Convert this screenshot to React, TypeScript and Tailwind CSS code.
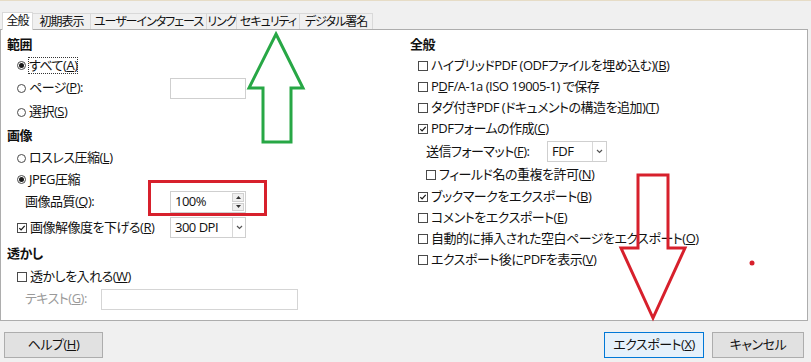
import React from 'react';

function Box({ checked = false }: { checked?: boolean }) {
  return (
    <span className="inline-flex w-[10px] h-[10px] border border-[#4a4a4a] bg-white items-center justify-center mr-[3px] shrink-0">
      {checked && (
        <svg width="8" height="8" viewBox="0 0 8 8">
          <path d="M1.3 4.1 L3.1 5.9 L6.7 1.9" stroke="#1a1a1a" strokeWidth="1.3" fill="none" />
        </svg>
      )}
    </span>
  );
}

function Radio({ on = false }: { on?: boolean }) {
  return (
    <span className="inline-flex w-[9px] h-[9px] rounded-full border border-[#4a4a4a] bg-white items-center justify-center mr-[3px] shrink-0">
      {on && <span className="w-[5px] h-[5px] rounded-full bg-[#1a1a1a]" />}
    </span>
  );
}

function Chevron() {
  return (
    <svg width="7" height="5" viewBox="0 0 7 5">
      <path d="M1 1 L3.5 3.5 L6 1" stroke="#555" strokeWidth="1.2" fill="none" />
    </svg>
  );
}

export default function App() {
  const tabs = [
    { label: '全般', w: 'w-[31px]', active: true },
    { label: '初期表示', w: 'w-[58px]' },
    { label: 'ユーザーインタフェース', w: 'w-[116px]' },
    { label: 'リンク', w: 'w-[30px]' },
    { label: 'セキュリティ', w: 'w-[63px]' },
    { label: 'デジタル署名', w: 'w-[73px]' },
  ];

  return (
    <div className="relative w-[811px] h-[362px] overflow-hidden bg-[#f0f0f0] text-[13px] tracking-[-0.5px] text-[#111] [font-family:'Open_Sans','Noto_Sans_CJK_JP',sans-serif] [font-feature-settings:'palt']">
      <div className="h-[1px] bg-[#e6dcc6]" />

      {/* Tabs */}
      <div className="h-[28px] flex items-end pl-[2px] relative z-10">
        {tabs.map((t) =>
          t.active ? (
            <div key={t.label} className={`${t.w} h-[18px] -mb-[1px] bg-white border border-[#d9d9d9] border-b-0 flex items-center justify-center text-[12px] tracking-[-1px] leading-none whitespace-nowrap pb-[1px]`}>
              {t.label}
            </div>
          ) : (
            <div key={t.label} className={`${t.w} h-[16px] bg-[#f0f0f0] border border-[#d9d9d9] border-b-0 border-l-0 flex items-center justify-center text-[12px] tracking-[-1px] leading-none whitespace-nowrap`}>
              {t.label}
            </div>
          )
        )}
      </div>

      {/* Panel */}
      <div className="w-[808px] h-[292px] bg-white border border-[#adadad] flex pt-[5px]">
        {/* Left column */}
        <div className="w-[409px] pl-[6px] flex flex-col">
          <div className="h-[20px] flex items-center font-bold">範囲</div>
          <div className="h-[21px] flex items-center pl-[10px]">
            <Radio on />
            <span className="outline outline-1 outline-dotted outline-[#333] leading-[15px]">すべて(<u>A</u>)</span>
          </div>
          <div className="h-[24px] flex items-center pl-[10px]">
            <div className="w-[153px] flex items-center">
              <Radio />
              ページ(<u>P</u>):
            </div>
            <div className="w-[76px] h-[21px] border border-[#cfcfcf] bg-white" />
          </div>
          <div className="h-[24px] flex items-center pl-[10px]">
            <Radio />
            選択(<u>S</u>)
          </div>
          <div className="h-[23px] flex items-center font-bold">画像</div>
          <div className="h-[22px] flex items-center pl-[10px]">
            <Radio />
            ロスレス圧縮(<u>L</u>)
          </div>
          <div className="h-[21px] flex items-center pl-[10px]">
            <Radio on />
            <u>J</u>PEG圧縮
          </div>
          <div className="h-[24px] flex items-center pl-[18px]">
            <div className="w-[145px]">
              画像品質(<u>Q</u>):
            </div>
            <div className="w-[76px] h-[22px] border border-[#cfcfcf] bg-white flex items-center">
              <span className="flex-1 pl-[4px]">100%</span>
              <div className="w-[12px] h-[18px] mr-[1px] flex flex-col gap-[1px]">
                <div className="flex-1 border border-[#d0d0d0] bg-[#f0f0f0] flex items-center justify-center">
                  <svg width="5" height="3" viewBox="0 0 5 3"><path d="M0 3 L2.5 0 L5 3 Z" fill="#333" /></svg>
                </div>
                <div className="flex-1 border border-[#d0d0d0] bg-[#f0f0f0] flex items-center justify-center">
                  <svg width="5" height="3" viewBox="0 0 5 3"><path d="M0 0 L2.5 3 L5 0 Z" fill="#333" /></svg>
                </div>
              </div>
            </div>
          </div>
          <div className="h-[27px] flex items-center pl-[10px]">
            <div className="w-[153px] flex items-center">
              <Box checked />
              画像解像度を下げる(<u>R</u>)
            </div>
            <div className="w-[76px] h-[21px] border border-[#cfcfcf] bg-white flex items-center">
              <span className="flex-1 pl-[4px]">300 DPI</span>
              <div className="w-[13px] h-[19px] border-l border-[#d8d8d8] flex items-center justify-center">
                <Chevron />
              </div>
            </div>
          </div>
          <div className="h-[25px] flex items-center font-bold">透かし</div>
          <div className="h-[22px] flex items-center pl-[10px]">
            <Box />
            透かしを入れる(<u>W</u>)
          </div>
          <div className="h-[22px] flex items-center pl-[18px]">
            <div className="w-[76px] text-[#9a9a9a]">
              テキスト(<u>G</u>):
            </div>
            <div className="w-[197px] h-[21px] border border-[#d5d5d5] bg-white" />
          </div>
        </div>

        {/* Right column */}
        <div className="flex-1 flex flex-col">
          <div className="h-[20px] flex items-center font-bold">全般</div>
          <div className="h-[21px] flex items-center pl-[8px]">
            <Box />
            ハイブリッドPDF (ODFファイルを埋め込む)(<u>B</u>)
          </div>
          <div className="h-[21px] flex items-center pl-[8px]">
            <Box />
            P<u>D</u>F/A-1a (ISO 19005-1) で保存
          </div>
          <div className="h-[21px] flex items-center pl-[8px]">
            <Box />
            タグ付きPDF (ドキュメントの構造を追加)(<u>T</u>)
          </div>
          <div className="h-[22px] flex items-center pl-[8px]">
            <Box checked />
            PDFフォームの作成(<u>C</u>)
          </div>
          <div className="h-[23px] flex items-center pl-[16px]">
            <div className="w-[121px]">
              送信フォーマット(<u>F</u>):
            </div>
            <div className="w-[60px] h-[21px] border border-[#cfcfcf] bg-white flex items-center">
              <span className="flex-1 pl-[4px]">FDF</span>
              <div className="w-[14px] h-[19px] border-l border-[#d8d8d8] flex items-center justify-center">
                <Chevron />
              </div>
            </div>
          </div>
          <div className="h-[23px] flex items-center pl-[16px]">
            <Box />
            フィールド名の重複を許可(<u>N</u>)
          </div>
          <div className="h-[21px] flex items-center pl-[8px]">
            <Box checked />
            ブックマークをエクスポート(<u>B</u>)
          </div>
          <div className="h-[21px] flex items-center pl-[8px]">
            <Box />
            コメントをエクスポート(<u>E</u>)
          </div>
          <div className="h-[21px] flex items-center pl-[8px]">
            <Box />
            自動的に挿入された空白ページをエクスポート(<u>O</u>)
          </div>
          <div className="h-[21px] flex items-center pl-[8px]">
            <Box />
            エクスポート後にPDFを表示(<u>V</u>)
          </div>
        </div>
      </div>

      {/* Buttons */}
      <div className="mt-[11px] flex items-center">
        <button className="ml-[4px] w-[99px] h-[26px] border border-[#adadad] bg-[#e1e1e1] text-[13px] flex items-center justify-center">
          ヘルプ(<u>H</u>)
        </button>
        <div className="flex-1" />
        <button className="w-[100px] h-[26px] border border-[#0078d7] bg-[#e5f1fb] text-[13px] flex items-center justify-center">
          エクスポート(<u>X</u>)
        </button>
        <button className="ml-[8px] mr-[7px] w-[92px] h-[26px] border border-[#adadad] bg-[#e1e1e1] text-[13px] flex items-center justify-center">
          キャンセル
        </button>
      </div>

      {/* Annotations */}
      <svg className="absolute inset-0 pointer-events-none" width="811" height="362" viewBox="0 0 811 362">
        <polygon points="276,34 303,88 291,88 291,142 263,142 263,88 249,88" fill="none" stroke="#27a745" strokeWidth="3" strokeLinejoin="miter" />
        <rect x="149.5" y="181.5" width="116" height="33" fill="none" stroke="#d7202c" strokeWidth="3" />
        <polygon points="638,175 668,175 668,248 685,248 653,318 621,248 638,248" fill="none" stroke="#d7202c" strokeWidth="3" strokeLinejoin="miter" />
        <circle cx="752" cy="263" r="2.5" fill="#d7202c" />
      </svg>
    </div>
  );
}
